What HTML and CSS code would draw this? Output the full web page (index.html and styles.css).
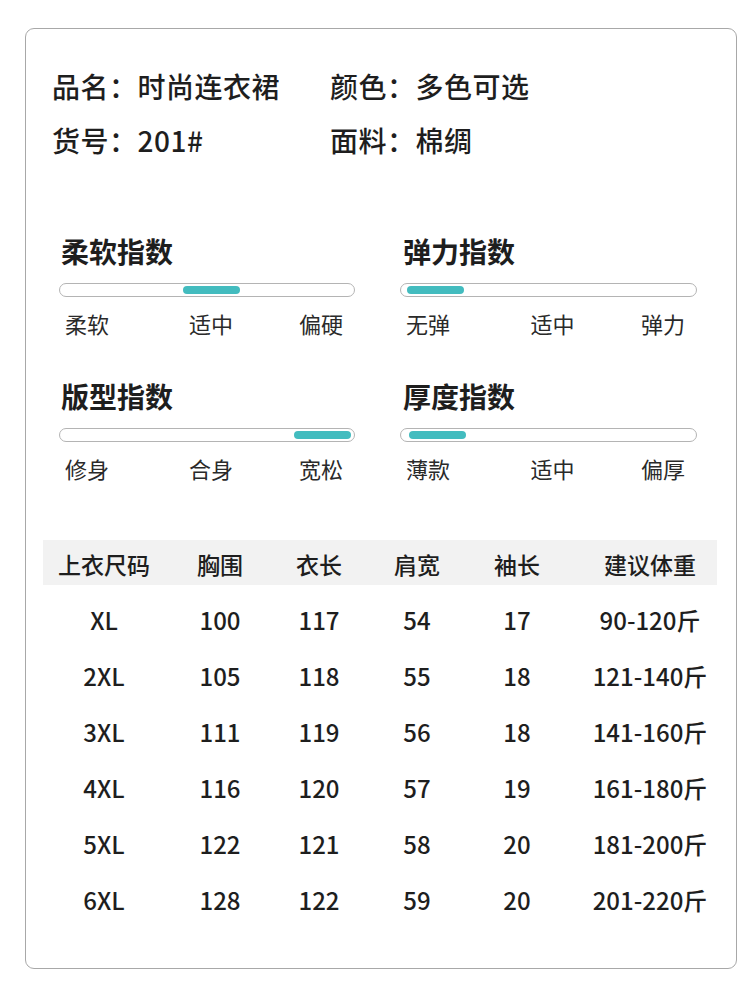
FILE: index.html
```html
<!DOCTYPE html>
<html lang="zh">
<head>
<meta charset="utf-8">
<link rel="stylesheet" href="styles.css">
</head>
<body>
<div class="card">
  <div class="info">
    <div class="info-item">品名：时尚连衣裙</div>
    <div class="info-item">颜色：多色可选</div>
    <div class="info-item">货号：201#</div>
    <div class="info-item">面料：棉绸</div>
  </div>

  <div class="meters">
    <div class="meter">
      <div class="meter-title">柔软指数</div>
      <div class="track"><div class="fill" style="left:123px;width:57px"></div></div>
      <div class="labels"><span>柔软</span><span class="mid">适中</span><span>偏硬</span></div>
    </div>
    <div class="meter right">
      <div class="meter-title">弹力指数</div>
      <div class="track"><div class="fill" style="left:6px;width:57px"></div></div>
      <div class="labels"><span>无弹</span><span class="mid">适中</span><span>弹力</span></div>
    </div>
    <div class="meter">
      <div class="meter-title">版型指数</div>
      <div class="track"><div class="fill" style="left:234px;width:57px"></div></div>
      <div class="labels"><span>修身</span><span class="mid">合身</span><span>宽松</span></div>
    </div>
    <div class="meter right">
      <div class="meter-title">厚度指数</div>
      <div class="track"><div class="fill" style="left:8px;width:57px"></div></div>
      <div class="labels"><span>薄款</span><span class="mid">适中</span><span>偏厚</span></div>
    </div>
  </div>

  <div class="table">
    <div class="row head">
      <div>上衣尺码</div><div>胸围</div><div>衣长</div><div>肩宽</div><div>袖长</div><div>建议体重</div>
    </div>
    <div class="row"><div>XL</div><div>100</div><div>117</div><div>54</div><div>17</div><div>90-120斤</div></div>
    <div class="row"><div>2XL</div><div>105</div><div>118</div><div>55</div><div>18</div><div>121-140斤</div></div>
    <div class="row"><div>3XL</div><div>111</div><div>119</div><div>56</div><div>18</div><div>141-160斤</div></div>
    <div class="row"><div>4XL</div><div>116</div><div>120</div><div>57</div><div>19</div><div>161-180斤</div></div>
    <div class="row"><div>5XL</div><div>122</div><div>121</div><div>58</div><div>20</div><div>181-200斤</div></div>
    <div class="row"><div>6XL</div><div>128</div><div>122</div><div>59</div><div>20</div><div>201-220斤</div></div>
  </div>
</div>
</body>
</html>
```

FILE: styles.css
```css
* { box-sizing: border-box; }
html, body { margin: 0; padding: 0; background: #fff; }
body {
  width: 750px;
  height: 996px;
  font-family: "Noto Sans CJK SC", "Noto Sans", sans-serif;
  color: #1e1e1e;
  padding-top: 28px;
}
.card {
  margin-left: 25px;
  width: 712px;
  height: 941px;
  border: 1px solid #a8a8a8;
  border-radius: 9px;
  padding: 30px 0 0 26px;
}
.info {
  display: grid;
  grid-template-columns: 278px 1fr;
  font-size: 28px;
  letter-spacing: 0.5px;
  line-height: 54px;
  font-weight: 500;
}
.meters {
  margin-top: 66px;
  padding-left: 7px;
  display: grid;
  grid-template-columns: 296px 297px;
  column-gap: 45px;
  row-gap: 40px;
}
.meter-title {
  font-size: 28px;
  line-height: 36px;
  font-weight: 700;
  padding-left: 2px;
}
.right .meter-title { padding-left: 3px; }
.track {
  position: relative;
  margin-top: 14px;
  height: 14px;
  border: 1px solid #b4b4b4;
  border-radius: 7px;
  background: #fff;
}
.fill {
  position: absolute;
  top: 2px;
  height: 8px;
  border-radius: 4px;
  background: #43bcbf;
}
.labels {
  margin-top: 11px;
  display: flex;
  justify-content: space-between;
  font-size: 22px;
  line-height: 30px;
  color: #2a2a2a;
  padding: 0 12px 0 6px;
}
.labels .mid { margin-left: 14px; }
.table {
  margin-top: 57px;
  margin-left: -9px;
  width: 674px;
}
.row {
  display: grid;
  grid-template-columns: 122px 110px 88px 108px 92px 154px;
  height: 56px;
  align-items: center;
  text-align: center;
  font-size: 24px;
  font-weight: 500;
}
.row > div:last-child { padding-left: 20px; white-space: nowrap; }
.row.head {
  background: #f2f2f2;
  height: 45px;
  padding-top: 3px;
  margin-bottom: 6px;
  font-size: 23px;
  font-weight: 500;
}
```
